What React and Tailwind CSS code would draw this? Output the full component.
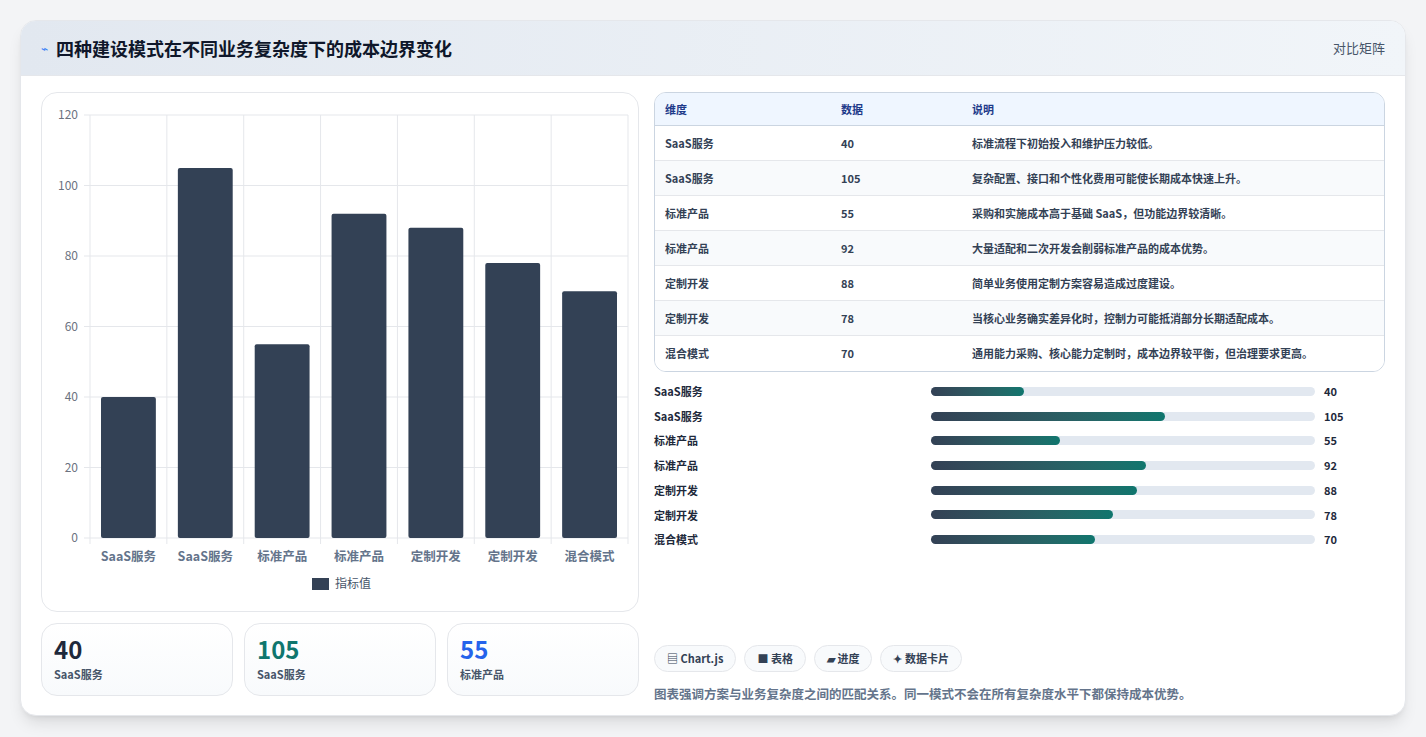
const rows = [
  ['SaaS服务', 40, '标准流程下初始投入和维护压力较低。', 93],
  ['SaaS服务', 105, '复杂配置、接口和个性化费用可能使长期成本快速上升。', 234],
  ['标准产品', 55, '采购和实施成本高于基础 SaaS，但功能边界较清晰。', 129],
  ['标准产品', 92, '大量适配和二次开发会削弱标准产品的成本优势。', 215],
  ['定制开发', 88, '简单业务使用定制方案容易造成过度建设。', 206],
  ['定制开发', 78, '当核心业务确实差异化时，控制力可能抵消部分长期适配成本。', 182],
  ['混合模式', 70, '通用能力采购、核心能力定制时，成本边界较平衡，但治理要求更高。', 164],
]

const font = { fontFamily: '"Noto Sans CJK SC", "Noto Sans", sans-serif' }

function Chart() {
  const x0 = 48, x1 = 586, yTop = 22, yBot = 445
  const col = (x1 - x0) / 7
  const y = (v) => yBot - (v / 120) * (yBot - yTop)
  return (
    <svg width="598" height="520" className="block">
      {[0, 20, 40, 60, 80, 100, 120].map((t) => (
        <g key={t}>
          <line x1={x0 - 6} x2={x1} y1={y(t)} y2={y(t)} stroke="#e5e7eb" />
          <text x={x0 - 12} y={y(t) + 4} textAnchor="end" fontSize="12" fill="#6b7280">{t}</text>
        </g>
      ))}
      {Array.from({ length: 8 }).map((_, i) => (
        <line key={i} x1={x0 + i * col} x2={x0 + i * col} y1={yTop} y2={yBot + 6} stroke="#e5e7eb" />
      ))}
      {rows.map(([n, v], i) => (
        <g key={i}>
          <rect x={x0 + i * col + 11} y={y(v)} width={col - 22} height={yBot - y(v)} rx="2" fill="#334155" />
          <text x={x0 + i * col + col / 2} y={468} textAnchor="middle" fontSize="12.5" fontWeight="600" fill="#64748b">{n}</text>
        </g>
      ))}
      <rect x="270" y="485" width="17" height="12" fill="#334155" />
      <text x="293" y="495" fontSize="12" fill="#475569">指标值</text>
    </svg>
  )
}

export default function App() {
  return (
    <div className="min-h-screen bg-[#f3f4f6] p-5 pb-0" style={font}>
      <div className="bg-white rounded-2xl shadow-lg border border-[#e5e7eb] overflow-hidden h-[696px]">
        <div className="h-[55px] bg-gradient-to-r from-[#e2e8f0] to-[#f1f5f9] flex items-center justify-between px-5 border-b border-[#e5e7eb]">
          <div className="flex items-center gap-2">
            <span className="text-[#3b82f6] text-xs">⌁</span>
            <h1 className="text-[18px] font-bold text-[#0f172a]">四种建设模式在不同业务复杂度下的成本边界变化</h1>
          </div>
          <span className="text-[13px] text-[#475569]">对比矩阵</span>
        </div>
        <div className="flex gap-[15px] px-5 pt-4">
          <div className="w-[598px] flex flex-col gap-[11px]">
            <div className="border border-[#e5e7eb] rounded-2xl h-[520px] overflow-hidden">
              <Chart />
            </div>
            <div className="grid grid-cols-3 gap-[11px]">
              {[['40', 'text-[#1e293b]'], ['105', 'text-[#0f766e]'], ['55', 'text-[#2563eb]']].map(([v, c], i) => (
                <div key={i} className="h-[73px] rounded-2xl border border-[#e5e7eb] bg-gradient-to-b from-white to-[#f8fafc] px-3 pt-2">
                  <div className={`text-[24px] font-bold leading-[34px] ${c}`}>{v}</div>
                  <div className="text-[11px] font-semibold text-[#475569]">{rows[i][0]}</div>
                </div>
              ))}
            </div>
          </div>
          <div className="flex-1 flex flex-col">
            <div className="border border-[#cbd5e1] rounded-xl overflow-hidden">
              <div className="grid grid-cols-[176px_131px_1fr] h-[33px] items-center bg-[#eff6ff] border-b border-[#cbd5e1] px-[10px] text-[11px] font-semibold text-[#1e3a8a]">
                <span>维度</span><span>数据</span><span>说明</span>
              </div>
              {rows.map(([n, v, d], i) => (
                <div key={i} className={`grid grid-cols-[176px_131px_1fr] h-[35px] items-center px-[10px] text-[11px] font-semibold text-[#334155] ${i % 2 ? 'bg-[#f8fafc]' : 'bg-white'} ${i < 6 ? 'border-b border-[#e5e7eb]' : ''}`}>
                  <span>{n}</span><span>{v}</span><span>{d}</span>
                </div>
              ))}
            </div>
            <div className="flex flex-col gap-[10px] mt-3">
              {rows.map(([n, v, , w], i) => (
                <div key={i} className="flex items-center h-[14.7px] text-[11px] font-semibold text-[#1e293b]">
                  <span className="w-[277px]">{n}</span>
                  <div className="w-[384px] h-[9px] rounded-full bg-[#e2e8f0]">
                    <div className="h-full rounded-full bg-gradient-to-r from-[#334155] to-[#0f766e]" style={{ width: w }} />
                  </div>
                  <span className="ml-[9px]">{v}</span>
                </div>
              ))}
            </div>
            <div className="flex gap-2 mt-[98px]">
              {['▤ Chart.js', '■ 表格', '▰ 进度', '✦ 数据卡片'].map((t) => (
                <span key={t} className="h-[27px] px-3 flex items-center rounded-full border border-[#e5e7eb] bg-[#f8fafc] text-[11px] font-semibold text-[#334155]">{t}</span>
              ))}
            </div>
            <p className="mt-[13px] text-[12.5px] font-semibold text-[#64748b]">图表强调方案与业务复杂度之间的匹配关系。同一模式不会在所有复杂度水平下都保持成本优势。</p>
          </div>
        </div>
      </div>
    </div>
  )
}
